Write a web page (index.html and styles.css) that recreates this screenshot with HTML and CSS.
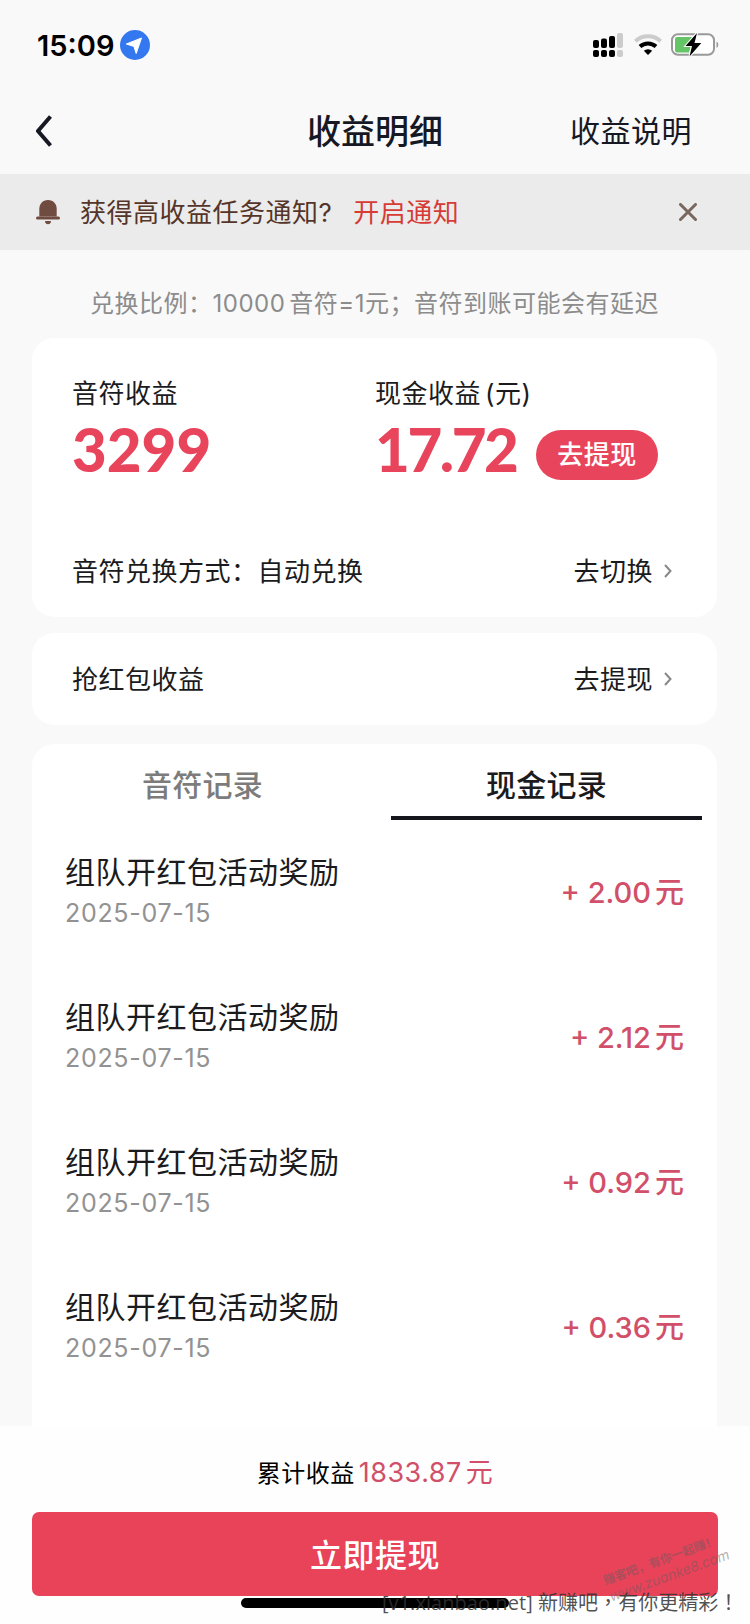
FILE: index.html
```html
<!DOCTYPE html>
<html lang="zh-CN">

<head>
    <meta charset="UTF-8">
    <meta name="viewport" content="width=device-width, initial-scale=1.0">
    <title>收益明细</title>
    <link rel="stylesheet" href="styles.css">
</head>

<body>
    <!-- STATUS BAR -->
    <div class="Status">
        <span class="Status-time">15:09</span>
        <svg class="Status-location" width="30" height="30" viewBox="0 0 30 30">
            <circle cx="15" cy="15" r="15" fill="#3478f0" />
            <path d="M21.5 8 L16.2 23.5 L13.9 16.4 L6.3 14 Z" fill="#fff" stroke="#fff" stroke-linejoin="round" />
        </svg>
        <svg class="Status-icons" width="128" height="26" viewBox="0 0 128 26">
            <g fill="#000">
                <rect x="0" y="8" width="6" height="8" rx="2" />
                <rect x="8" y="6.5" width="6" height="9.5" rx="2" />
                <rect x="16" y="4" width="6" height="12" rx="2" />
                <rect x="0" y="18" width="6" height="7" rx="2" />
                <rect x="8" y="18" width="6" height="7" rx="2" />
                <rect x="16" y="18" width="6" height="7" rx="2" />
            </g>
            <g fill="#ccc">
                <rect x="24" y="1" width="6" height="15" rx="2" />
                <rect x="24" y="18" width="6" height="7" rx="2" />
            </g>
            <g fill="none" stroke-width="4">
                <path d="M42.4 9.3 A18.5 18.5 0 0 1 67.6 9.3" stroke="#ccc" />
                <path d="M47 14.5 A12 12 0 0 1 63 14.5" stroke="#000" />
            </g>
            <path d="M50.8 18.8 A6.2 6.2 0 0 1 59.2 18.8 L55 23 Z" fill="#000" />
            <rect x="79" y="2.2" width="42" height="20.6" rx="6" fill="#fff" stroke="#999" stroke-width="2" />
            <path d="M84 5 H100 L93 14 H98 L96 20.5 H84 A2 2 0 0 1 82 18.5 V7 A2 2 0 0 1 84 5 Z" fill="#65c466" />
            <path d="M123.5 9.5 A3.8 3.8 0 0 1 123.5 16 Z" fill="#999" />
            <path d="M104 1 L92.5 14 H99 L96.5 24.5 L108.3 11 H101.5 Z" fill="#000" stroke="#fff" stroke-width="2" paint-order="stroke" />
        </svg>
    </div>

    <!-- HEADER -->
    <header class="Header">
        <svg class="Header-back" width="16" height="32" viewBox="0 0 16 32">
            <path d="M14.5 1.5 L2 16 L14.5 30.5" fill="none" stroke="#161823" stroke-width="4" />
        </svg>
        <h1 class="Header-title">收益明细</h1>
        <a class="Header-link">收益说明</a>
    </header>

    <!-- NOTICE -->
    <div class="Notice">
        <svg width="24" height="25" viewBox="0 0 24 25" fill="#704b40">
            <path d="M12 0 C6.5 0 3.3 4 3.3 9 V16.5 H20.7 V9 C20.7 4 17.5 0 12 0 Z" />
            <rect x="0" y="16.5" width="24" height="3" rx="1.5" />
            <path d="M9 21 H15 C15 25.3 9 25.3 9 21 Z" />
        </svg>
        <span class="Notice-text">获得高收益任务通知?</span>
        <a class="Notice-link">开启通知</a>
        <svg class="Notice-close" width="18" height="18" viewBox="0 0 18 18">
            <path d="M1.5 1.5 L16.5 16.5 M16.5 1.5 L1.5 16.5" stroke="#79665c" stroke-width="3" stroke-linecap="round" />
        </svg>
    </div>

    <!-- MAIN -->
    <main class="Main">
        <p class="Main-hint">兑换比例：<span class="Main-hintNumber">10000</span>音符=1元；音符到账可能会有延迟</p>

        <section class="Card Card--income">
            <div class="Income">
                <div class="Income-item">
                    <p class="Income-label">音符收益</p>
                    <p class="Income-value">3299</p>
                </div>
                <div class="Income-item">
                    <p class="Income-label">现金收益<span class="Income-unit">(元)</span></p>
                    <div class="Income-row">
                        <p class="Income-value Income-value--cash">17.72</p>
                        <a class="Income-button">去提现</a>
                    </div>
                </div>
            </div>
            <div class="Line">
                <span class="Line-text">音符兑换方式：自动兑换</span>
                <a class="Line-link"><span class="Line-text">去切换</span>
                    <svg width="8" height="14" viewBox="0 0 8 14"><path d="M1 1 L6.5 7 L1 13" fill="none" stroke="#888" stroke-width="2" /></svg>
                </a>
            </div>
        </section>

        <section class="Card Card--packet">
            <div class="Line">
                <span class="Line-text">抢红包收益</span>
                <a class="Line-link"><span class="Line-text">去提现</span>
                    <svg width="8" height="14" viewBox="0 0 8 14"><path d="M1 1 L6.5 7 L1 13" fill="none" stroke="#888" stroke-width="2" /></svg>
                </a>
            </div>
        </section>

        <section class="Card Card--records">
            <div class="Tabs">
                <div class="Tabs-item">音符记录</div>
                <div class="Tabs-item is-active">现金记录</div>
            </div>
            <div class="Record">
                <div>
                    <h2 class="Record-title">组队开红包活动奖励</h2>
                    <p class="Record-date">2025-07-15</p>
                </div>
                <p class="Record-amount">+ 2.00<span class="Record-unit">元</span></p>
            </div>
            <div class="Record">
                <div>
                    <h2 class="Record-title">组队开红包活动奖励</h2>
                    <p class="Record-date">2025-07-15</p>
                </div>
                <p class="Record-amount">+ 2.12<span class="Record-unit">元</span></p>
            </div>
            <div class="Record">
                <div>
                    <h2 class="Record-title">组队开红包活动奖励</h2>
                    <p class="Record-date">2025-07-15</p>
                </div>
                <p class="Record-amount">+ 0.92<span class="Record-unit">元</span></p>
            </div>
            <div class="Record">
                <div>
                    <h2 class="Record-title">组队开红包活动奖励</h2>
                    <p class="Record-date">2025-07-15</p>
                </div>
                <p class="Record-amount">+ 0.36<span class="Record-unit">元</span></p>
            </div>
        </section>
    </main>

    <!-- FOOTER -->
    <footer class="Footer">
        <p class="Footer-total">累计收益<span class="Footer-number">1833.87</span><span class="Footer-unit">元</span></p>
        <a class="Footer-button">立即提现</a>
        <div class="Footer-home"></div>
        <div class="Footer-stamp">赚客吧，有你一起赚！<br><span class="Footer-site">www.zuanke8.com</span></div>
        <div class="Footer-mark" lang="zh-TW">[v1.xianbao.net] 新赚吧，有你更精彩！</div>
    </footer>
</body>

</html>
```

FILE: styles.css
```css
:root {
    --color-background: #f9f9f9;
    --color-text: #161823;
    --color-grey: #8c8c8c;
    --color-red: #e8455c;
    --color-amount: #d14f69;
}

/* RESET */
* {
    margin: 0;
    padding: 0;
    box-sizing: border-box;
}

body {
    width: 750px;
    height: 1624px;
    overflow: hidden;
    position: relative;
    display: flex;
    flex-direction: column;
    background-color: var(--color-background);
    color: #1b1b1d;
    font-family: Inter, "Noto Sans CJK SC", sans-serif;
    font-size: 26px;
    letter-spacing: 0.5px;
}

svg {
    flex-shrink: 0;
}

/* STATUS BAR */
.Status {
    height: 90px;
    padding: 0 29px 0 37px;
    display: flex;
    align-items: center;
}

.Status-time {
    width: 83px;
    font-size: 29px;
    font-weight: 600;
    letter-spacing: 0;
    color: #000;
}

.Status-icons {
    margin-left: auto;
}

/* HEADER */
.Header {
    height: 84px;
    padding: 0 58px 2px 36px;
    display: grid;
    grid-template-columns: 1fr auto 1fr;
    align-items: center;
    color: var(--color-text);
}

.Header-title {
    font-size: 34px;
    font-weight: 500;
    letter-spacing: 0;
    margin-right: -22px;
    padding-bottom: 4px;
}

.Header-link {
    font-size: 30px;
    justify-self: end;
    padding-bottom: 5px;
}

/* NOTICE */
.Notice {
    height: 76px;
    padding: 0 53px 0 36px;
    display: flex;
    align-items: center;
    background-color: #ebebeb;
    color: #553529;
}

.Notice-text {
    margin-left: 20px;
    padding-bottom: 4px;
}

.Notice-link {
    margin-left: 21px;
    padding-bottom: 4px;
    color: #d63b36;
}

.Notice-close {
    margin-left: auto;
}

/* MAIN */
.Main {
    flex: 1;
    min-height: 0;
    overflow: hidden;
    padding: 0 33px 0 32px;
}

.Main-hint {
    height: 88px;
    padding-top: 16px;
    line-height: 75px;
    text-align: center;
    white-space: nowrap;
    font-size: 24px;
    color: var(--color-grey);
}

.Main-hintNumber {
    margin-right: 4px;
}

.Card {
    background-color: #fff;
    border-radius: 22px;
}

.Card--income {
    height: 279px;
    padding-top: 36px;
}

.Card--packet {
    height: 92px;
    margin-top: 16px;
}

.Card--records {
    height: 700px;
    margin-top: 19px;
}

.Income {
    height: 151px;
    padding-left: 40px;
    display: grid;
    grid-template-columns: 303px 1fr;
}

.Income-label {
    line-height: 40px;
}

.Income-unit {
    margin-left: 4px;
}

.Income-row {
    display: flex;
    align-items: center;
}

.Income-value {
    height: 74px;
    font-family: Lato, sans-serif;
    font-size: 60px;
    font-weight: 900;
    line-height: 71px;
    letter-spacing: 0;
    color: var(--color-red);
}

.Income-value--cash {
    width: 161px;
    letter-spacing: -2.4px;
}

.Income-button {
    width: 122px;
    height: 50px;
    margin-top: 7px;
    border-radius: 25px;
    background-color: var(--color-red);
    color: #fff;
    font-weight: 500;
    line-height: 49px;
    text-align: center;
}

.Line {
    height: 92px;
    padding: 0 45px 0 40px;
    display: flex;
    justify-content: space-between;
    align-items: center;
}

.Line-text {
    padding-bottom: 4px;
}

.Line-link {
    display: flex;
    align-items: center;
    gap: 11px;
}

/* RECORDS */
.Tabs {
    height: 76px;
    padding: 0 15px;
    display: grid;
    grid-template-columns: 1fr 1fr;
    column-gap: 33px;
}

.Tabs-item {
    height: 76px;
    line-height: 82px;
    text-align: center;
    font-size: 30px;
    font-weight: 500;
    letter-spacing: 0.2px;
    color: #7c7c7c;
}

.Tabs-item.is-active {
    color: #1b1b1d;
    border-bottom: 4px solid #15151d;
}

.Record {
    height: 145px;
    padding: 0 33px;
    display: flex;
    justify-content: space-between;
    align-items: center;
}

.Record-title {
    font-size: 30px;
    font-weight: 400;
    line-height: 40px;
}

.Record-date {
    font-size: 25px;
    line-height: 42px;
    letter-spacing: 0.7px;
    color: #929292;
}

.Record-amount {
    font-size: 29px;
    font-weight: 500;
    letter-spacing: 0;
    padding-bottom: 5px;
    color: var(--color-amount);
}

.Record-unit {
    margin-left: 4px;
}

/* FOOTER */
.Footer {
    position: relative;
    height: 198px;
    padding: 0 32px;
    background-color: #fefefe;
}

.Footer-total {
    height: 86px;
    line-height: 93px;
    text-align: center;
    font-size: 24px;
    color: #000;
}

.Footer-number,
.Footer-unit {
    margin-left: 4px;
    font-size: 27px;
    color: var(--color-amount);
}

.Footer-button {
    display: block;
    height: 84px;
    border-radius: 7px;
    background-color: #e84359;
    color: #fff;
    font-size: 32px;
    font-weight: 500;
    line-height: 87px;
    text-align: center;
}

.Footer-home {
    width: 268px;
    height: 10px;
    margin: 2px auto 0;
    border-radius: 5px;
    background-color: #000;
}

.Footer-stamp {
    position: absolute;
    left: 603px;
    top: 124px;
    transform: rotate(-20deg);
    white-space: nowrap;
    font-size: 12px;
    font-weight: 700;
    line-height: 17px;
    letter-spacing: 0;
    color: rgba(110, 90, 95, 0.5);
}

.Footer-site {
    font-size: 14px;
    font-style: italic;
    font-weight: 400;
}

.Footer-mark {
    position: absolute;
    left: 382px;
    top: 163px;
    white-space: nowrap;
    font-family: "Open Sans", "Noto Sans CJK TC", sans-serif;
    font-size: 20px;
    line-height: 28px;
    letter-spacing: 0.05px;
    color: rgba(50, 50, 50, 0.85);
}
```
